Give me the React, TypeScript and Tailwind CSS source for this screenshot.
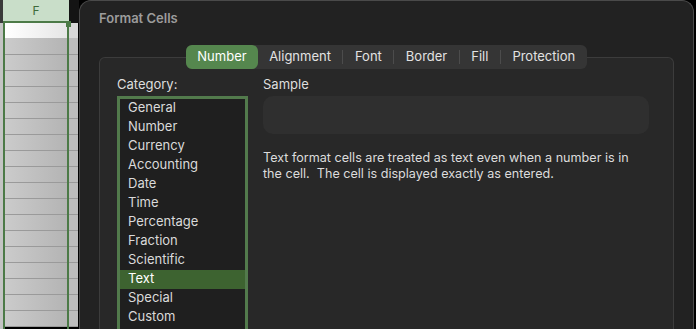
const CATEGORIES = [
  "General",
  "Number",
  "Currency",
  "Accounting",
  "Date",
  "Time",
  "Percentage",
  "Fraction",
  "Scientific",
  "Text",
  "Special",
  "Custom",
];

const TABS = ["Number", "Alignment", "Font", "Border", "Fill", "Protection"];

const ROWS = Array.from({ length: 18 }, (_, i) => i);

const Sheet = () => (
  <div className="relative flex w-[79px] shrink-0 flex-col">
    {/* column header */}
    <div className="flex h-[23px] shrink-0">
      <div className="w-[3px] bg-[#3a3a3a]" />
      <div className="flex w-[66px] items-center justify-center border-b-2 border-[#4c7a47] bg-[#c9dec9] text-[12px] text-[#3f6b3b]">
        F
      </div>
      <div className="flex-1 bg-[#141414]" />
    </div>
    {/* cells */}
    <div className="flex min-h-0 flex-1 overflow-hidden">
      <div className="w-[3px] bg-[#c4c4c4]" />
      <div className="flex w-[66px] flex-col border-x-2 border-[#4c7a47]">
        <div className="h-[15px] shrink-0 bg-gradient-to-r from-white to-[#e6e6e6]" />
        {ROWS.map((r) => (
          <div
            key={r}
            className={
              r === 0
                ? "h-[17px] shrink-0 border-b border-[#9a9a9a] bg-gradient-to-r from-[#cbcbcb] to-[#b4b4b4]"
                : "h-[16px] shrink-0 border-b border-[#9a9a9a] bg-gradient-to-r from-[#cbcbcb] to-[#b4b4b4]"
            }
          />
        ))}
      </div>
      <div className="flex flex-1 flex-col border-r border-black">
        <div className="h-[15px] shrink-0 bg-[#d8d8d8]" />
        {ROWS.map((r) => (
          <div
            key={r}
            className={
              r === 0
                ? "h-[17px] shrink-0 border-b border-[#9a9a9a] bg-[#bdbdbd]"
                : "h-[16px] shrink-0 border-b border-[#9a9a9a] bg-[#bdbdbd]"
            }
          />
        ))}
      </div>
    </div>
    {/* fill handle */}
    <div className="absolute left-[66px] top-[21px] h-[6px] w-[5px] bg-[#4c7a47]" />
  </div>
);

export default function App() {
  return (
    <div
      className="flex h-[329px] w-[696px] overflow-hidden bg-black"
      style={{ fontFamily: "Inter, 'Noto Sans', sans-serif" }}
    >
      <Sheet />
      <div className="mr-[2px] flex flex-1 flex-col rounded-t-[12px] border border-b-0 border-[#4a4a4a] bg-[#222222] px-[19px]">
        <div className="pt-[8px] text-[13px] font-semibold text-[#9c9c9c]">Format Cells</div>

        <div className="mt-[16px] flex flex-1 flex-col">
          <div className="relative z-10 flex h-[24px] items-center self-center rounded-[6px] bg-[#353535] text-[13px] text-[#e2e2e2]">
            {TABS.map((t, i) => (
              <div key={t} className="flex items-center">
                {i > 1 && <div className="h-[14px] w-px bg-[#4c4c4c]" />}
                <div
                  className={
                    i === 0
                      ? "flex h-[24px] items-center rounded-[6px] bg-[#55874e] px-[11px] text-white"
                      : "px-[11.5px]"
                  }
                >
                  {t}
                </div>
              </div>
            ))}
          </div>

          <div className="-mt-[12px] flex flex-1 rounded-t-[6px] border border-b-0 border-[#3c3c3c] bg-[#282828] pl-[17px] pr-[24px] pt-[18px]">
            <div className="flex w-[131px] flex-col">
              <div className="h-[20px] text-[13px] leading-[16px] text-[#dedede]">Category:</div>
              <div className="flex-1 border-[3px] border-b-0 border-[#527a4c] bg-[#1f1f1f] text-[13px] text-[#dadada]">
                {CATEGORIES.map((c) => (
                  <div
                    key={c}
                    className={
                      c === "Text"
                        ? "flex h-[19px] items-center bg-[#3d6330] pl-[8px] text-white"
                        : "flex h-[19px] items-center pl-[8px]"
                    }
                  >
                    {c}
                  </div>
                ))}
              </div>
            </div>

            <div className="ml-[15px] flex flex-1 flex-col">
              <div className="h-[20px] text-[13px] leading-[16px] text-[#dedede]">Sample</div>
              <div className="h-[38px] rounded-[10px] bg-[#2f2f2f]" />
              <p className="mt-[16px] whitespace-nowrap text-[12.6px] leading-[16px] text-[#dcdcdc]">
                Text format cells are treated as text even when a number is in
                <br />
                the cell.&nbsp; The cell is displayed exactly as entered.
              </p>
            </div>
          </div>
        </div>
      </div>
    </div>
  );
}
